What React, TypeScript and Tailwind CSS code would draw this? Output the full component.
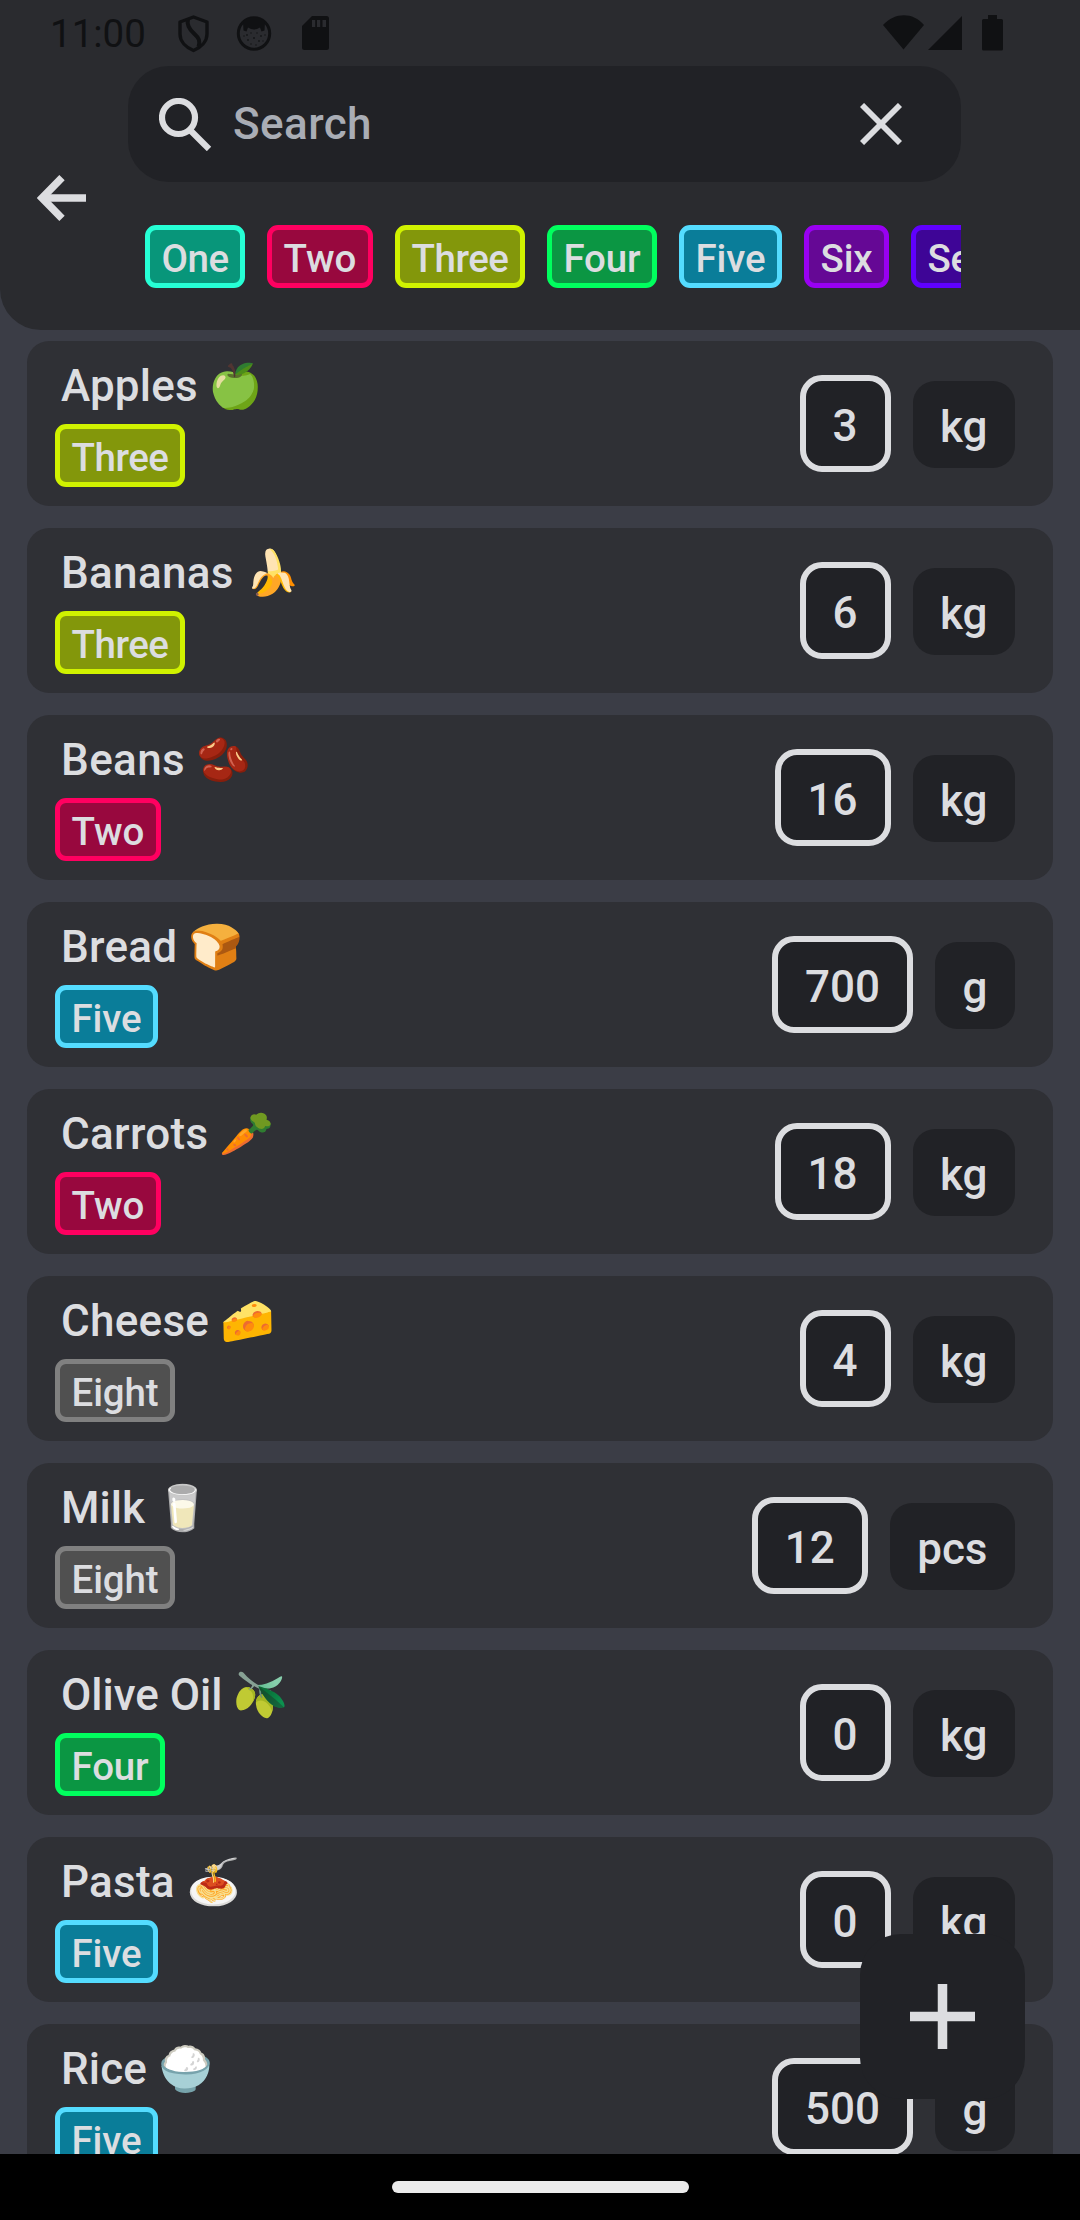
import React from "react";

type Tag = "One" | "Two" | "Three" | "Four" | "Five" | "Six" | "Seven" | "Eight";

const tagStyle: Record<Tag, string> = {
  One: "tracking-[-0.5px] border-[#26ffd5] bg-[#08967a]",
  Two: "border-[#ff0060] bg-[#98083e]",
  Three: "tracking-[-0.47px] border-[#d0f200] bg-[#83970b]",
  Four: "tracking-[-0.17px] border-[#00ff5e] bg-[#0b9643]",
  Five: "tracking-[-0.12px] border-[#54dcff] bg-[#0a7d99]",
  Six: "tracking-[-0.16px] border-[#9900f2] bg-[#650895]",
  Seven: "tracking-[-0.3px] border-[#6000ff] bg-[#3e0596]",
  Eight: "tracking-[-0.12px] border-[#808080] bg-[#505050]",
};

const tags: Tag[] = ["One", "Two", "Three", "Four", "Five", "Six", "Seven"];

const items: { name: string; emoji: string; tag: Tag; qty: string; unit: string; tracking: string }[] = [
  { name: "Apples", emoji: "🍏", tag: "Three", qty: "3", unit: "kg", tracking: "tracking-[0.17px]" },
  { name: "Bananas", emoji: "🍌", tag: "Three", qty: "6", unit: "kg", tracking: "tracking-[0.3px]" },
  { name: "Beans", emoji: "🫘", tag: "Two", qty: "16", unit: "kg", tracking: "tracking-[0.36px]" },
  { name: "Bread", emoji: "🍞", tag: "Five", qty: "700", unit: "g", tracking: "tracking-[0.24px]" },
  { name: "Carrots", emoji: "🥕", tag: "Two", qty: "18", unit: "kg", tracking: "tracking-[0.33px]" },
  { name: "Cheese", emoji: "🧀", tag: "Eight", qty: "4", unit: "kg", tracking: "tracking-[0.28px]" },
  { name: "Milk", emoji: "🥛", tag: "Eight", qty: "12", unit: "pcs", tracking: "" },
  { name: "Olive Oil", emoji: "🫒", tag: "Four", qty: "0", unit: "kg", tracking: "" },
  { name: "Pasta", emoji: "🍝", tag: "Five", qty: "0", unit: "kg", tracking: "tracking-[0.24px]" },
  { name: "Rice", emoji: "🍚", tag: "Five", qty: "500", unit: "g", tracking: "tracking-[0.15px]" },
];

function Chip({ tag }: { tag: Tag }) {
  return (
    <span
      className={`flex h-[63px] shrink-0 items-center rounded-[11px] border-[5px] px-[11.5px] pt-[3px] text-[38.5px] leading-[45px] ${tagStyle[tag]}`}
    >
      {tag}
    </span>
  );
}

function StatusBar() {
  return (
    <div className="flex h-[66px] items-start justify-between pr-[77px] pl-[50px] text-[#101113]">
      <div className="flex">
        <span className="mt-[11px] w-[128px] text-[38.5px] leading-[46px] font-normal">11:00</span>
        <svg className="mt-[14px] h-[40px] w-[32px]" viewBox="0 0 32 40" fill="none" stroke="currentColor" strokeWidth="3.4" strokeLinejoin="round">
          <path d="M15.500 3 29 8V20C29 27.500 23 33.500 15.500 36.500 8 33.500 2 27.500 2 20V8Z" />
          <path d="M10 5C8.500 11 11 15 16 19.500S22.500 27 20.500 33" strokeWidth="4" />
        </svg>
        <svg className="mt-[15px] ml-[26px] h-[38px] w-[36px]" viewBox="0 0 36 38">
          <circle cx="18" cy="18.500" r="15.700" fill="none" stroke="currentColor" strokeWidth="3" />
          <path d="M7 7C11 1 25 1 29 7L28.500 15.500 25.500 16.500 24 12.500Q18 16.500 12 12.500L10.500 16.500 7.500 15.500Z" fill="currentColor" />
          <g fill="currentColor" opacity=".8">
            <circle cx="8" cy="21" r=".8" />
            <circle cx="11" cy="20" r=".9" />
            <circle cx="15" cy="18" r=".8" />
            <circle cx="21" cy="18" r=".8" />
            <circle cx="25" cy="21" r=".9" />
            <circle cx="29" cy="20" r=".8" />
            <circle cx="12" cy="25" r=".9" />
            <circle cx="18" cy="23" r="1" />
            <circle cx="23" cy="26" r=".9" />
            <circle cx="27" cy="26" r=".7" />
            <circle cx="15" cy="29" r=".8" />
            <circle cx="20" cy="30" r=".8" />
          </g>
        </svg>
        <svg className="mt-[16px] ml-[30px] h-[34px] w-[27px]" viewBox="0 0 27 34">
          <path d="M10 0H24.500Q27 0 27 2.500V31.500Q27 34 24.500 34H2.500Q0 34 0 31.500V10Z" fill="currentColor" />
          <path d="M10 4h3.200v7h-3.200zM15 4h3.200v7H15zM20.500 4h3.500v7h-3.500z" fill="#2a2b2f" />
        </svg>
      </div>
      <div className="flex pt-[15px]">
        <svg className="h-[35px] w-[42px]" viewBox="0 0 42 35" fill="currentColor">
          <path d="M0 10C12-3 30-3 41 10L20.500 34.500Z" />
        </svg>
        <svg className="ml-[3px] h-[35px] w-[34px]" viewBox="0 0 34 35" fill="currentColor">
          <path d="M34 1V35H0Z" />
        </svg>
        <svg className="ml-[20px] h-[36px] w-[21px]" viewBox="0 0 21 36" fill="currentColor">
          <path d="M6 0H15V4H19.500Q21 4 21 5.500V34Q21 35.500 19.500 35.500H1.500Q0 35.500 0 34V5.500Q0 4 1.500 4H6Z" />
        </svg>
      </div>
    </div>
  );
}

function Header() {
  return (
    <header className="h-[330px] rounded-bl-[41px] bg-[#2a2b2f]">
      <StatusBar />
      <div className="flex">
        <div className="w-[128px] shrink-0 pt-[109px] pl-[37px]">
          <svg className="h-[46px] w-[50px]" viewBox="0 0 50 46" fill="none" stroke="#dcdde0" strokeWidth="7.500">
            <path d="M49 23H5" />
            <path d="M25 2.600 5 23 25 43.400" />
          </svg>
        </div>
        <div className="w-[833px]">
          <div className="flex h-[116px] items-center rounded-[41px] bg-[#212226] pl-[31px]">
            <svg className="h-[53px] w-[54px]" viewBox="0 0 54 53" fill="none" stroke="#dcdde0" strokeWidth="6.200">
              <circle cx="19.500" cy="19.500" r="16.500" />
              <path d="M31 32 50 51" />
            </svg>
            <span className="ml-[20px] flex-1 text-[44px] leading-[52px] tracking-[0.4px] text-[#a9adb5]">Search</span>
            <svg className="mr-[59px] h-[42px] w-[42px]" viewBox="0 0 42 42" stroke="#dcdde0" strokeWidth="5.800">
              <path d="M2 2 40 40M40 2 2 40" />
            </svg>
          </div>
          <div className="mt-[43px] flex gap-[22px] overflow-hidden pl-[17px]">
            {tags.map((t) => (
              <Chip key={t} tag={t} />
            ))}
          </div>
        </div>
      </div>
    </header>
  );
}

export default function App() {
  return (
    <div className="relative flex h-[2220px] w-[1080px] flex-col overflow-hidden bg-[#3b3d46] font-['Roboto','Noto_Color_Emoji',sans-serif] font-medium text-[#dcdde0]">
      <Header />
      <main className="flex min-h-0 flex-1 flex-col gap-[22px] overflow-hidden px-[27px] pt-[11px]">
        {items.map((it) => (
          <article key={it.name} className="flex h-[165px] shrink-0 items-center rounded-[22px] bg-[#2f3035] pr-[38px] pl-[28px]">
            <div className="flex h-full flex-1 flex-col items-start pt-[19px]">
              <div className={`flex h-[52px] items-center pl-[6px] text-[44px] leading-[52px] whitespace-pre ${it.tracking}`}>
                {it.name} {it.emoji}
              </div>
              <div className="mt-[12px]">
                <Chip tag={it.tag} />
              </div>
            </div>
            <div className="flex h-[97px] items-center rounded-[22px] border-[6px] border-[#dcdde0] bg-[#212226] px-[27px] pt-[4px] text-[44px] leading-[52px]">
              {it.qty}
            </div>
            <div className="mt-[2px] ml-[22px] flex h-[87px] items-center rounded-[22px] bg-[#212226] px-[27.5px] pt-[4px] text-[44px] leading-[52px]">
              {it.unit}
            </div>
          </article>
        ))}
      </main>
      <nav className="flex h-[66px] shrink-0 items-center justify-center bg-black">
        <div className="h-[12px] w-[297px] rounded-full bg-[#ebebeb]" />
      </nav>
      <button className="absolute right-[55px] bottom-[121px] flex h-[165px] w-[165px] items-center justify-center rounded-[41px] bg-[#212226]">
        <svg className="h-[65px] w-[65px]" viewBox="0 0 65 65" stroke="#dcdde0" strokeWidth="9.500">
          <path d="M0 32.500H65M32.500 0V65" />
        </svg>
      </button>
    </div>
  );
}
